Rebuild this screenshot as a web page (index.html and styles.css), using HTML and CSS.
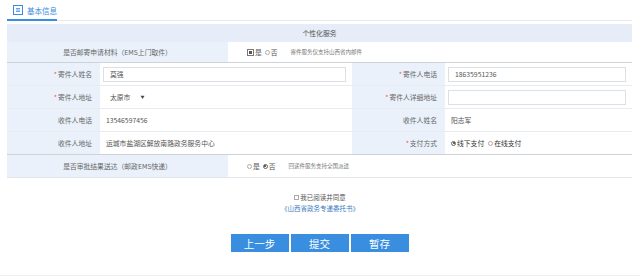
FILE: index.html
```html
<!DOCTYPE html>
<html lang="zh">
<head>
<meta charset="utf-8">
<link rel="stylesheet" href="styles.css">
</head>
<body>
<div class="page">
  <div class="tabs">
    <div class="tab">
      <svg class="tab-icon" width="10" height="10" viewBox="0 0 10 10"><rect x="0.5" y="0.5" width="9" height="9" fill="none" stroke="#3a8ee0" stroke-width="1"/><path d="M3 3.5h4M3 5h4M3 6.5h4" stroke="#3a8ee0" stroke-width="0.8"/></svg>
      <span>基本信息</span>
    </div>
  </div>
  <div class="form">
    <div class="row-head">个性化服务</div>
    <div class="row two strong-bottom">
      <div class="label center">是否邮寄申请材料（EMS上门取件）</div>
      <div class="value"><span class="chk"></span>是<span class="radio"></span>否<span class="note">寄件服务仅支持山西省内邮件</span></div>
    </div>
    <div class="row four">
      <div class="label"><i>*</i>寄件人姓名</div>
      <div class="value"><div class="input">莫强</div></div>
      <div class="label"><i>*</i>寄件人电话</div>
      <div class="value"><div class="input">18635951236</div></div>
    </div>
    <div class="row four">
      <div class="label"><i>*</i>寄件人地址</div>
      <div class="value"><span class="select">太原市</span><span class="arrow">▼</span></div>
      <div class="label"><i>*</i>寄件人详细地址</div>
      <div class="value"><div class="input"></div></div>
    </div>
    <div class="row four">
      <div class="label">收件人电话</div>
      <div class="value plain">13546597456</div>
      <div class="label">收件人姓名</div>
      <div class="value plain">阳志军</div>
    </div>
    <div class="row four strong-bottom">
      <div class="label">收件人地址</div>
      <div class="value plain">运城市盐湖区解放南路政务服务中心</div>
      <div class="label"><i>*</i>支付方式</div>
      <div class="value plain dark"><span class="radio on"></span>线下支付<span class="radio gap"></span>在线支付</div>
    </div>
    <div class="row two last">
      <div class="label center">是否审批结果送达（邮政EMS快递）</div>
      <div class="value"><span class="radio"></span>是<span class="radio on"></span>否<span class="note">回递件服务支持全国派送</span></div>
    </div>
  </div>
  <div class="agree">
    <div class="agree-line"><span class="box"></span>我已阅读并同意</div>
    <div class="agree-link">《山西省政务专递委托书》</div>
  </div>
  <div class="buttons">
    <button class="btn">上一步</button>
    <button class="btn">提交</button>
    <button class="btn">暂存</button>
  </div>
  <div class="bottom-line"></div>
</div>
</body>
</html>
```
FILE: styles.css
```css
* { box-sizing: border-box; }
html, body { margin: 0; padding: 0; background: #fff; }
body {
  font-family: "Microsoft YaHei", "Noto Sans CJK SC", "Liberation Sans", sans-serif;
  color: #555;
  width: 640px;
  height: 276px;
  overflow: hidden;
}
.page { width: 640px; }
.tabs {
  margin-left: 7px;
  width: 625px;
  height: 21px;
  border-bottom: 1px solid #e6e9ee;
  display: flex;
  align-items: flex-end;
}
.tab {
  width: 50px;
  height: 21px;
  margin-bottom: -1px;
  border-bottom: 2px solid #3a8ee0;
  display: flex;
  align-items: center;
  gap: 4px;
  padding-left: 6px;
  padding-top: 1px;
  color: #3a8ee0;
  font-size: 7.5px;
}
.tab-icon { display: block; }
.form {
  margin-top: 3px;
  margin-left: 7px;
  width: 625px;
  font-size: 6.8px;
  border-bottom: 1px solid #e3e6ea;
}
.row-head {
  height: 18px;
  background: #e6edf8;
  display: flex;
  align-items: center;
  justify-content: center;
  color: #555;
}
.row {
  display: grid;
  border-bottom: 1px solid #e8ebef;
  height: 23px;
}
.row.two { grid-template-columns: 221px 1fr; height: 21px; }
.row.two.last { height: 22px; border-bottom: none; }
.row.four { grid-template-columns: 93px 252px 93px 1fr; }
.row.strong-bottom { border-bottom: 1px solid #cfd3d8; }
.label {
  background: #eaf1fa;
  display: flex;
  align-items: center;
  justify-content: flex-end;
  padding-right: 8px;
  color: #666;
}
.label.center { justify-content: center; padding-right: 0; }
.label i { font-style: normal; color: #e05050; margin-right: 1px; }
.value {
  display: flex;
  align-items: center;
  padding-left: 3px;
  padding-right: 6px;
  color: #555;
}
.row.two .value { padding-left: 19px; }
.value.plain { padding-left: 6px; }
.value.dark { color: #333; }
.input {
  width: 100%;
  height: 15px;
  border: 1px solid #dcdfe4;
  display: flex;
  align-items: center;
  padding-left: 6px;
  color: #555;
}
.select { padding-left: 7px; }
.arrow { font-size: 4px; margin-left: 10px; color: #444; }
.chk {
  display: inline-block;
  width: 7px;
  height: 7px;
  border: 1px solid #777;
  margin-right: 1px;
  position: relative;
}
.chk::after {
  content: "";
  position: absolute;
  left: 1px; top: 1px;
  width: 3px; height: 3px;
  background: #555;
}
.radio {
  display: inline-block;
  width: 5px;
  height: 5px;
  border: 1px solid #aaa;
  border-radius: 50%;
  margin: 0 1px 0 3px;
  position: relative;
}
.value .radio:first-child { margin-left: 0; }
.radio.on { border-color: #666; }
.radio.on::after {
  content: "";
  position: absolute;
  left: 0.5px; top: 0.5px;
  width: 2px; height: 2px;
  border-radius: 50%;
  background: #333;
}
.radio.gap { margin-left: 4px; }
.note { font-size: 5.5px; margin-left: 13px; color: #777; }
.agree {
  margin-top: 14px;
  text-align: center;
  font-size: 6.5px;
}
.agree-line { height: 11px; line-height: 11px; color: #555; display: flex; justify-content: center; align-items: center; }
.box { display: inline-block; width: 5px; height: 5px; border: 1px solid #aaa; margin-right: 1px; }
.agree-link { height: 11px; line-height: 11px; color: #3a78c0; }
.buttons {
  margin-top: 20px;
  display: flex;
  justify-content: center;
  gap: 2px;
  padding-right: 1px;
}
.btn {
  width: 58px;
  height: 18px;
  border: none;
  background: #3a8ee0;
  color: #fff;
  font-family: "Microsoft YaHei", "Noto Sans CJK SC", sans-serif;
  font-size: 10.5px;
  padding: 0;
  display: flex;
  align-items: center;
  justify-content: center;
}
.bottom-line {
  margin-top: 23px;
  height: 3px;
  background: #eeeeee;
}
```
